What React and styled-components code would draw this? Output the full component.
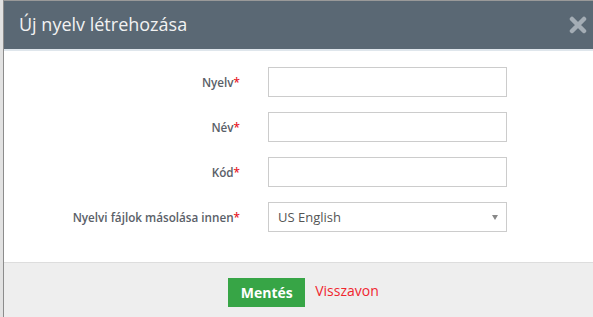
import { Fragment } from 'react';
import styled, { createGlobalStyle } from 'styled-components';

// Estilos globais: fundo da página por trás do modal e fonte padrão.
const GlobalStyle = createGlobalStyle`
  html, body {
    margin: 0;
    padding: 0;
    background: #e2e2e2;
    font-family: "Open Sans", "Liberation Sans", sans-serif;
  }
`;

// Área da página; o modal começa após uma pequena faixa à esquerda.
const Page = styled.div`
  padding-left: 3px;
  height: 317px;
  overflow: hidden;
`;

const Modal = styled.div`
  background: #fff;
  border-top: 1px solid #999;
  border-left: 1px solid #8c8c8c;
  height: 100%;
  display: flex;
  flex-direction: column;
`;

const Header = styled.div`
  background: #5a6874;
  border-bottom: 2px solid #dfe6ec;
  height: 48px;
  display: flex;
  align-items: center;
  justify-content: space-between;
  padding: 0 6px 0 15px;
`;

const Title = styled.h3`
  margin: 0;
  font-size: 18px;
  font-weight: 400;
  color: #f2f2f2;
  padding-bottom: 2px;
`;

const Close = styled.button`
  border: none;
  background: none;
  padding: 0;
  width: 18px;
  height: 18px;
  cursor: pointer;
  display: flex;
`;

const Body = styled.form`
  display: grid;
  grid-template-columns: 236px 239px;
  column-gap: 28px;
  row-gap: 15px;
  padding: 16px 0 30px;
  align-items: center;
`;

const Label = styled.label`
  text-align: right;
  font-size: 11.7px;
  font-weight: 600;
  color: #5a6068;
`;

const Star = styled.span`
  color: #e8212a;
`;

const Input = styled.input`
  box-sizing: border-box;
  width: 239px;
  height: 30px;
  border: 1px solid #cccccc;
  border-radius: 0;
  padding: 0 9px;
  font: inherit;
  font-size: 13px;
  outline: none;
`;

const SelectBox = styled.div`
  box-sizing: border-box;
  width: 239px;
  height: 30px;
  border: 1px solid #cccccc;
  display: flex;
  align-items: center;
  justify-content: space-between;
  padding: 0 8px 0 9px;
  font-size: 13px;
  color: #555;
`;

const Caret = styled.span`
  width: 0;
  height: 0;
  border-left: 3px solid transparent;
  border-right: 3px solid transparent;
  border-top: 5px solid #888;
`;

const Footer = styled.div`
  flex: 1;
  background: #eeeeee;
  border-top: 1px solid #dddddd;
  padding: 15px 0 0 10px;
  display: flex;
  justify-content: center;
  align-items: flex-start;
  gap: 10px;
`;

const SaveButton = styled.button`
  background: #37a546;
  border: none;
  color: #fff;
  font-family: inherit;
  font-size: 14px;
  font-weight: 700;
  width: 77px;
  height: 29px;
  cursor: pointer;
`;

const CancelLink = styled.a`
  color: #f0262e;
  font-size: 14px;
  text-decoration: none;
  line-height: 26px;
  cursor: pointer;
`;

const fields = [
  { id: 'nyelv', label: 'Nyelv' },
  { id: 'nev', label: 'Név' },
  { id: 'kod', label: 'Kód' },
];

export default function App() {
  return (
    <>
      <GlobalStyle />
      <Page>
        <Modal>
          <Header>
            <Title>Új nyelv létrehozása</Title>
            <Close aria-label="Bezár">
              <svg width="18" height="18" viewBox="0 0 18 18">
                <path d="M3 3 L15 15 M15 3 L3 15" stroke="#a4adb5" strokeWidth="4.5" strokeLinecap="round" />
              </svg>
            </Close>
          </Header>
          <Body>
            {fields.map((f) => (
              <Fragment key={f.id}>
                <Label htmlFor={f.id}>
                  {f.label}<Star>*</Star>
                </Label>
                <Input id={f.id} />
              </Fragment>
            ))}
            <Label>
              Nyelvi fájlok másolása innen<Star>*</Star>
            </Label>
            <SelectBox>
              US English
              <Caret />
            </SelectBox>
          </Body>
          <Footer>
            <SaveButton type="button">Mentés</SaveButton>
            <CancelLink>Visszavon</CancelLink>
          </Footer>
        </Modal>
      </Page>
    </>
  );
}
